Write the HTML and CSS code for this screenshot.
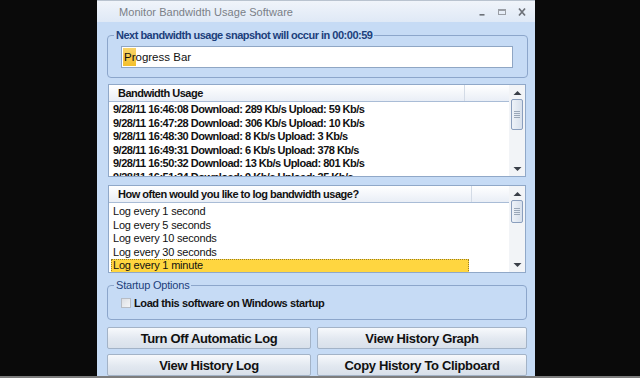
FILE: index.html
```html
<!DOCTYPE html>
<html>
<head>
<meta charset="utf-8">
<link rel="stylesheet" href="styles.css">
</head>
<body>
<div class="screen">
  <div class="window">
    <div class="titlebar">
      <span class="title">Monitor Bandwidth Usage Software</span>
      <div class="controls">
        <svg class="ctl" width="12" height="12" viewBox="0 0 12 12"><rect x="3.5" y="8" width="5" height="1.6" fill="#6d7178"/></svg>
        <svg class="ctl" width="12" height="12" viewBox="0 0 12 12"><rect x="2.5" y="3.5" width="7" height="5" fill="none" stroke="#9a9ea5"/><rect x="2.5" y="3.5" width="7" height="1.5" fill="#9a9ea5"/></svg>
        <svg class="ctl" width="12" height="12" viewBox="0 0 12 12"><path d="M3 2.5 L9 9.5 M9 2.5 L3 9.5" stroke="#6d7178" stroke-width="1.7"/></svg>
      </div>
    </div>
    <div class="content">
      <fieldset class="group group-snap">
        <legend class="legend-bold">Next bandwidth usage snapshot will occur in 00:00:59</legend>
        <div class="progress">
          <div class="progress-fill"></div>
          <span class="progress-text">Progress Bar</span>
        </div>
      </fieldset>

      <div class="listview list1">
        <div class="lv-main">
          <div class="lv-header"><span class="lv-col lv-col1">Bandwidth Usage</span><span class="lv-col lv-col2"></span></div>
          <div class="lv-rows bold-rows">
            <div class="lv-row">9/28/11 16:46:08 Download: 289 Kb/s Upload: 59 Kb/s</div>
            <div class="lv-row">9/28/11 16:47:28 Download: 306 Kb/s Upload: 10 Kb/s</div>
            <div class="lv-row">9/28/11 16:48:30 Download: 8 Kb/s Upload: 3 Kb/s</div>
            <div class="lv-row">9/28/11 16:49:31 Download: 6 Kb/s Upload: 378 Kb/s</div>
            <div class="lv-row">9/28/11 16:50:32 Download: 13 Kb/s Upload: 801 Kb/s</div>
            <div class="lv-row">9/28/11 16:51:34 Download: 9 Kb/s Upload: 35 Kb/s</div>
          </div>
        </div>
        <div class="scrollbar">
          <svg class="arrow" width="9" height="6" viewBox="0 0 9 6"><path d="M0.5 5 L4.5 1 L8.5 5 Z" fill="#3a3f48"/></svg>
          <div class="thumb thumb1"><span class="grip"></span><span class="grip"></span><span class="grip"></span><span class="grip"></span></div>
          <div class="track"></div>
          <svg class="arrow" width="9" height="6" viewBox="0 0 9 6"><path d="M0.5 1 L4.5 5 L8.5 1 Z" fill="#3a3f48"/></svg>
        </div>
      </div>

      <div class="listview list2">
        <div class="lv-main">
          <div class="lv-header"><span class="lv-col lv-col1b">How often would you like to log bandwidth usage?</span><span class="lv-col lv-col2"></span></div>
          <div class="lv-rows plain-rows">
            <div class="lv-row">Log every 1 second</div>
            <div class="lv-row">Log every 5 seconds</div>
            <div class="lv-row">Log every 10 seconds</div>
            <div class="lv-row">Log every 30 seconds</div>
            <div class="lv-row selected">Log every 1 minute</div>
          </div>
        </div>
        <div class="scrollbar">
          <svg class="arrow" width="9" height="6" viewBox="0 0 9 6"><path d="M0.5 5 L4.5 1 L8.5 5 Z" fill="#3a3f48"/></svg>
          <div class="thumb thumb2"><span class="grip"></span><span class="grip"></span><span class="grip"></span><span class="grip"></span></div>
          <div class="track"></div>
          <svg class="arrow" width="9" height="6" viewBox="0 0 9 6"><path d="M0.5 1 L4.5 5 L8.5 1 Z" fill="#3a3f48"/></svg>
        </div>
      </div>

      <fieldset class="group group-startup">
        <legend class="legend-plain">Startup Options</legend>
        <label class="check-row"><span class="checkbox"></span><span class="check-label">Load this software on Windows startup</span></label>
      </fieldset>

      <div class="buttons">
        <div class="btn">Turn Off Automatic Log</div>
        <div class="btn">View History Graph</div>
        <div class="btn">View History Log</div>
        <div class="btn">Copy History To Clipboard</div>
      </div>
    </div>
  </div>
</div>
<div class="edge"></div>
</body>
</html>
```
FILE: styles.css
```css
html, body {
  margin: 0;
  padding: 0;
  background: #0a0a0a;
  width: 640px;
  height: 378px;
  overflow: hidden;
  font-family: "Liberation Sans", Arial, sans-serif;
}
.screen {
  height: 376px;
  display: flex;
  padding-left: 97px;
  overflow: hidden;
}
.window {
  width: 438px;
  height: 376px;
  background: #c6dbf5;
  display: flex;
  flex-direction: column;
  overflow: hidden;
}
.titlebar {
  height: 22px;
  flex: none;
  display: flex;
  align-items: center;
  justify-content: space-between;
  background: linear-gradient(#f0f4fa, #dfe9f6);
  border-top: 1px solid #b9c3cf;
  box-sizing: border-box;
  padding: 1px 7px 0 22px;
}
.title {
  font-size: 11px;
  letter-spacing: 0.05px;
  color: #7a7f87;
}
.controls {
  display: flex;
  gap: 8px;
  align-items: center;
}
.content {
  padding: 0 8px 0 10px;
  display: flex;
  flex-direction: column;
}
.group {
  margin: 0;
  padding: 0;
  border: 1px solid #8ca6cb;
  border-radius: 4px;
  min-width: 0;
}
.group legend {
  margin-left: 6px;
  padding: 0 2px;
  line-height: 14px;
  font-size: 11px;
  color: #1c3f7c;
}
.legend-bold { font-weight: bold; letter-spacing: -0.5px; }
.legend-plain { font-weight: normal; color: #25477f; letter-spacing: -0.2px; }
.group-snap {
  margin-top: 6px;
  margin-right: -1px;
}
.progress {
  margin: 4px 14px 9px 13px;
  height: 22px;
  box-sizing: border-box;
  border: 1px solid #8fa6c4;
  background: #ffffff;
  display: flex;
  align-items: center;
  position: relative;
}
.progress-fill {
  position: absolute;
  left: 1px;
  top: 1px;
  bottom: 1px;
  width: 13px;
  background: linear-gradient(#f8d46a, #f3bf2b);
}
.progress-text {
  position: relative;
  padding-left: 2px;
  font-size: 11.5px;
  color: #111;
}
.listview {
  margin: 6px 1px 0 1px;
  border: 1px solid #90a8c8;
  background: #ffffff;
  display: flex;
  overflow: hidden;
}
.list1 { height: 91px; }
.list2 { height: 86px; margin-top: 8px; }
.lv-main {
  flex: 1;
  min-width: 0;
  display: flex;
  flex-direction: column;
}
.lv-header {
  height: 16px;
  flex: none;
  display: flex;
  background: linear-gradient(#ffffff, #e9eef6);
  border-bottom: 1px solid #a9bcd6;
}
.lv-col {
  font-size: 11px;
  font-weight: bold;
  letter-spacing: -0.5px;
  color: #111;
  line-height: 16px;
  box-sizing: border-box;
  padding-left: 9px;
  border-right: 1px solid #d3dbe6;
}
.lv-col1 { width: 356px; }
.lv-col1b { width: 363px; }
.lv-col2 { flex: 1; border-right: none; }
.lv-rows {
  overflow: hidden;
}
.list1 .lv-rows { padding-top: 1px; }
.list2 .lv-rows { padding-top: 2px; }
.lv-row {
  height: 13.5px;
  line-height: 13.5px;
  padding-left: 4px;
  font-size: 11px;
  color: #111;
  white-space: nowrap;
}
.bold-rows .lv-row { font-weight: bold; letter-spacing: -0.5px; }
.plain-rows .lv-row { font-weight: normal; letter-spacing: -0.2px; }
.lv-row.selected {
  width: 358px;
  margin-left: 2px;
  padding-left: 2px;
  box-sizing: border-box;
  background: #ffd640;
  outline: 1px dotted #9a7f22;
  outline-offset: -1px;
}
.scrollbar {
  width: 16px;
  flex: none;
  background: #f2f4f7;
  display: flex;
  flex-direction: column;
  align-items: center;
  padding: 5px 0 4px;
  box-sizing: border-box;
}
.arrow { flex: none; }
.thumb {
  flex: none;
  width: 12px;
  margin-top: 3px;
  box-sizing: border-box;
  border: 1px solid #8a9ebd;
  border-radius: 2px;
  background: linear-gradient(90deg, #eef2f8, #d7e0ec);
  display: flex;
  flex-direction: column;
  align-items: center;
  justify-content: center;
  gap: 1px;
}
.thumb1 { height: 31px; }
.thumb2 { height: 23px; }
.grip {
  width: 6px;
  height: 1px;
  background: #9aa7b8;
}
.track { flex: 1; }
.group-startup {
  margin-top: 5px;
  margin-right: 0;
}
.check-row {
  display: flex;
  align-items: center;
  height: 14px;
  margin: 4px 0 9px 13px;
  gap: 3px;
}
.checkbox {
  width: 10px;
  height: 10px;
  box-sizing: border-box;
  border: 1px solid #b7bcc4;
  background: linear-gradient(135deg, #dcdfe4, #f4f5f7);
}
.check-label {
  font-size: 11px;
  font-weight: bold;
  letter-spacing: -0.4px;
  color: #111;
}
.buttons {
  margin-top: 7px;
  display: grid;
  grid-template-columns: 204px 210px;
  column-gap: 6px;
  row-gap: 5px;
}
.btn {
  height: 22px;
  box-sizing: border-box;
  border: 1px solid #a3b3c7;
  border-radius: 2px;
  background: linear-gradient(#f7f9fc, #e2e8f0 55%, #d8e0ea);
  display: flex;
  align-items: center;
  justify-content: center;
  font-size: 13px;
  font-weight: bold;
  letter-spacing: -0.35px;
  color: #111;
}
.edge {
  height: 2px;
  background: #7d7d7d;
}
```
